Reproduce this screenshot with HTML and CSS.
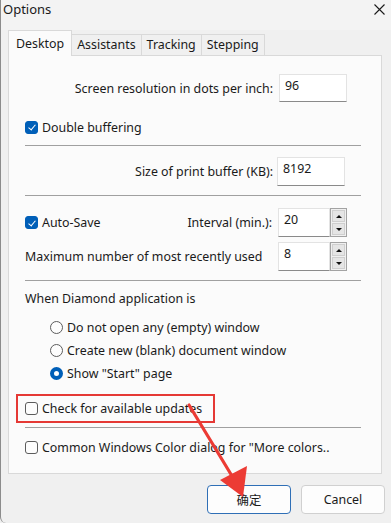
FILE: index.html
```html
<!DOCTYPE html>
<html lang="en">
<head>
  <meta charset="UTF-8">
  <meta name="viewport" content="width=device-width, initial-scale=1.0">
  <title>Options</title>
  <link rel="stylesheet" href="styles.css">
</head>
<body>
  <div class="window">
    <div class="titlebar">
      <span class="title">Options</span>
      <svg class="close" width="11" height="11" viewBox="0 0 11 11">
        <path d="M0.5 0.5 L10.5 10.5 M10.5 0.5 L0.5 10.5" stroke="#1a1a1a" stroke-width="1.1" fill="none"/>
      </svg>
    </div>

    <div class="tabs">
      <div class="tab active">Desktop</div>
      <div class="tab">Assistants</div>
      <div class="tab">Tracking</div>
      <div class="tab">Stepping</div>
    </div>

    <div class="panel">
      <div class="field-row first">
        <label>Screen resolution in dots per inch:</label>
        <div class="textbox">96</div>
      </div>

      <div class="check-row double">
        <span class="check on"></span>
        <span>Double buffering</span>
      </div>

      <div class="sep"></div>

      <div class="field-row buffer">
        <label>Size of print buffer (KB):</label>
        <div class="textbox">8192</div>
      </div>

      <div class="sep sep-b"></div>

      <div class="split-row interval">
        <div class="check-row">
          <span class="check on"></span>
          <span>Auto-Save</span>
        </div>
        <div class="field">
          <label>Interval (min.):</label>
          <div class="textbox small">20</div>
          <div class="spinner">
            <div class="spin up"></div>
            <div class="spin down"></div>
          </div>
        </div>
      </div>

      <div class="split-row recent">
        <span>Maximum number of most recently used</span>
        <div class="field">
          <div class="textbox small">8</div>
          <div class="spinner">
            <div class="spin up"></div>
            <div class="spin down"></div>
          </div>
        </div>
      </div>

      <div class="sep sep-b"></div>

      <div class="caption">When Diamond application is</div>

      <div class="radios">
        <div class="radio-row"><span class="radio"></span><span>Do not open any (empty) window</span></div>
        <div class="radio-row"><span class="radio"></span><span>Create new (blank) document window</span></div>
        <div class="radio-row"><span class="radio on"></span><span>Show "Start" page</span></div>
      </div>

      <div class="highlight">
        <div class="check-row">
          <span class="check"></span>
          <span>Check for available updates</span>
        </div>
      </div>

      <div class="sep sep-c"></div>

      <div class="check-row common">
        <span class="check"></span>
        <span>Common Windows Color dialog for "More colors..</span>
      </div>
    </div>

    <div class="footer">
      <button class="btn default">确定</button>
      <button class="btn">Cancel</button>
    </div>

    <svg class="arrow" width="391" height="523" viewBox="0 0 391 523">
      <path d="M188 405 L231 476" stroke="#ec3b34" stroke-width="3.2" stroke-linecap="round" fill="none"/>
      <path d="M219 480 L246 466 L242 497 Z" fill="#ec3b34"/>
    </svg>
  </div>
</body>
</html>
```

FILE: styles.css
```css
* {
  box-sizing: border-box;
}
body {
  margin: 0;
  font-family: 'Noto Sans', 'Noto Sans CJK SC', sans-serif;
  font-size: 12.4px;
  color: #1a1a1a;
  background: #f0f0f0;
}
.window {
  position: relative;
  width: 391px;
  height: 523px;
  background: #f0f0f0;
  border-left: 1px solid #8c8c8c;
  border-bottom-left-radius: 6px;
  overflow: hidden;
}
.titlebar {
  height: 30px;
  display: flex;
  justify-content: space-between;
  padding: 0 6px 0 2px;
  background: #f3f3f3;
}
.title {
  font-size: 13px;
  line-height: 18px;
}
.close {
  margin-top: 4px;
}
.tabs {
  display: flex;
  align-items: flex-end;
  height: 25px;
  margin-left: 7px;
}
.tab {
  height: 21px;
  line-height: 20px;
  padding: 0 5px;
  border: 1px solid #d9d9d9;
  border-bottom: none;
  border-left: none;
  background: #f0f0f0;
}
.tab.active {
  height: 26px;
  line-height: 26px;
  padding: 0 7px;
  margin-bottom: -1px;
  border-left: 1px solid #d9d9d9;
  background: #fbfbfb;
  position: relative;
}
.panel {
  margin: 0 9px 0 7px;
  height: 419px;
  padding: 18px 20px 0 16px;
  background: #fbfbfb;
  border: 1px solid #d9d9d9;
}
.field-row {
  display: flex;
  justify-content: flex-end;
  align-items: center;
  gap: 6px;
  height: 28px;
  padding-right: 14px;
}
.field-row.buffer {
  margin-top: 11px;
  height: 29px;
  gap: 4px;
  padding-right: 16px;
}
.textbox {
  width: 68px;
  height: 100%;
  padding: 3px 5px;
  background: #fff;
  border: 1px solid #e3e3e3;
  border-bottom-color: #8a8a8a;
  line-height: 16px;
}
.textbox.small {
  width: 52px;
}
.check-row {
  display: flex;
  align-items: center;
  gap: 4px;
  height: 20px;
}
.check-row.double {
  margin-top: 15px;
}
.check {
  width: 13px;
  height: 13px;
  border: 1px solid #5c5c5c;
  border-radius: 3px;
  background: #fdfdfd;
  position: relative;
}
.check.on {
  border-color: #005fb8;
  background: #005fb8;
}
.check.on::after {
  content: "";
  position: absolute;
  left: 3.5px;
  top: 1.5px;
  width: 3px;
  height: 6px;
  border: solid #fff;
  border-width: 0 1px 1px 0;
  transform: rotate(40deg);
}
.sep {
  height: 1px;
  background: #a0a0a0;
  margin-top: 8px;
}
.sep-b {
  margin-top: 9px;
}
.sep-c {
  margin-top: 4px;
}
.split-row {
  display: flex;
  justify-content: space-between;
  align-items: center;
  height: 29px;
  padding-right: 14px;
}
.split-row.interval {
  margin-top: 12px;
}
.split-row.recent {
  margin-top: 5px;
}
.field {
  display: flex;
  align-items: center;
  height: 100%;
}
.field label {
  margin-right: 6px;
}
.spinner {
  width: 17px;
  height: 100%;
  display: flex;
  flex-direction: column;
  gap: 1px;
  padding: 1px;
  border: 1px solid #a3a3a3;
  background: #f0f0f0;
}
.spin {
  flex: 1;
  background: #e5e5e5;
  border: 1px solid #cfcfcf;
  position: relative;
}
.spin::after {
  content: "";
  position: absolute;
  left: 3px;
  top: 4px;
  border-left: 3px solid transparent;
  border-right: 3px solid transparent;
}
.spin.up::after {
  border-bottom: 3px solid #111;
}
.spin.down::after {
  border-top: 3px solid #111;
}
.caption {
  margin-top: 8px;
  height: 20px;
  line-height: 20px;
}
.radios {
  margin-top: 7px;
  padding-left: 25px;
}
.radio-row {
  display: flex;
  align-items: center;
  gap: 4px;
  height: 23px;
}
.radio {
  width: 13px;
  height: 13px;
  border: 1px solid #5c5c5c;
  border-radius: 50%;
  background: #fdfdfd;
}
.radio.on {
  border: 4px solid #005fb8;
  background: #fff;
}
.highlight {
  margin: 9px 0 0 -9px;
  width: 199px;
  height: 29px;
  padding: 2px 0 0 7px;
  border: 2px solid #e53935;
}
.check-row.common {
  margin-top: 9px;
}
.footer {
  display: flex;
  justify-content: flex-end;
  gap: 10px;
  padding: 11px 6px 0 0;
}
.btn {
  width: 84px;
  height: 29px;
  font-family: 'Noto Sans', 'Noto Sans CJK SC', sans-serif;
  font-size: 12.4px;
  color: #1a1a1a;
  background: #fdfdfd;
  border: 1px solid #d0d0d0;
  border-radius: 4px;
}
.btn.default {
  border-color: #2f6fb6;
}
.arrow {
  position: absolute;
  left: 0;
  top: 0;
}
```
